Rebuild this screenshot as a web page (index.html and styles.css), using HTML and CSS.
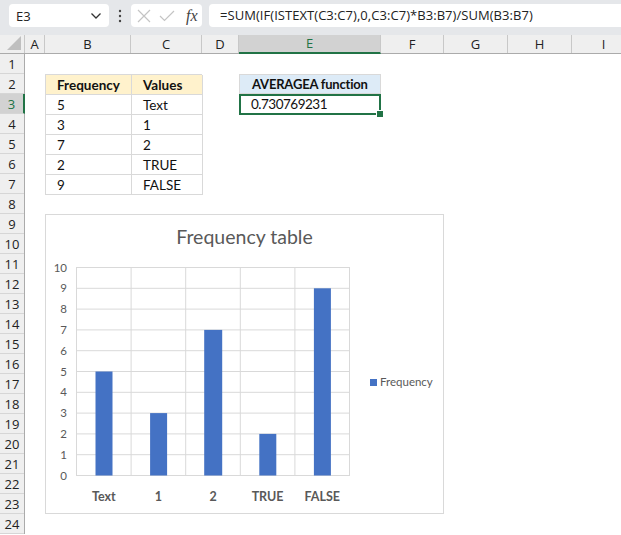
FILE: index.html
```html
<!DOCTYPE html>
<html>
<head>
<meta charset="utf-8">
<link rel="stylesheet" href="styles.css">
</head>
<body>
<div class="app">
  <div class="fbar">
    <div class="namebox">
      <span>E3</span>
      <svg class="chev" width="12" height="8" viewBox="0 0 12 8"><path d="M1.5 1.5 L6 6 L10.5 1.5" fill="none" stroke="#333" stroke-width="1.3"/></svg>
    </div>
    <div class="dots">
      <svg width="4" height="14" viewBox="0 0 4 14"><circle cx="2" cy="2" r="1.2" fill="#444"/><circle cx="2" cy="7" r="1.2" fill="#444"/><circle cx="2" cy="12" r="1.2" fill="#444"/></svg>
    </div>
    <div class="fxbox">
      <svg width="14" height="14" viewBox="0 0 14 14"><path d="M1 1 L13 13 M13 1 L1 13" stroke="#c4c4c4" stroke-width="1.2" fill="none"/></svg>
      <svg width="16" height="12" viewBox="0 0 16 12"><path d="M1 6 L5.5 10.5 L15 1" stroke="#c4c4c4" stroke-width="1.2" fill="none"/></svg>
      <span class="fx">fx</span>
    </div>
    <div class="formula">=SUM(IF(ISTEXT(C3:C7),0,C3:C7)*B3:B7)/SUM(B3:B7)</div>
  </div>

  <div class="colhdr">
    <div class="corner"><svg width="14" height="14" viewBox="0 0 14 14"><path d="M14 0 L14 14 L0 14 Z" fill="#bfbfbf"/></svg></div>
    <div class="ch w-a">A</div>
    <div class="ch w-b">B</div>
    <div class="ch w-c">C</div>
    <div class="ch w-d">D</div>
    <div class="ch w-e sel">E</div>
    <div class="ch w-f">F</div>
    <div class="ch w-g">G</div>
    <div class="ch w-h">H</div>
    <div class="ch w-i">I</div>
  </div>

  <div class="body">
    <div class="rowhdr">
      <div class="rh">1</div><div class="rh">2</div><div class="rh sel">3</div><div class="rh">4</div>
      <div class="rh">5</div><div class="rh">6</div><div class="rh">7</div><div class="rh">8</div>
      <div class="rh">9</div><div class="rh">10</div><div class="rh">11</div><div class="rh">12</div>
      <div class="rh">13</div><div class="rh">14</div><div class="rh">15</div><div class="rh">16</div>
      <div class="rh">17</div><div class="rh">18</div><div class="rh">19</div><div class="rh">20</div>
      <div class="rh">21</div><div class="rh">22</div><div class="rh">23</div><div class="rh">24</div>
    </div>
    <div class="cells">
      <div class="toprow">
        <div class="table">
          <div class="c hd">Frequency</div><div class="c hd">Values</div>
          <div class="c">5</div><div class="c">Text</div>
          <div class="c">3</div><div class="c">1</div>
          <div class="c">7</div><div class="c">2</div>
          <div class="c">2</div><div class="c">TRUE</div>
          <div class="c">9</div><div class="c">FALSE</div>
        </div>
        <div class="result">
          <div class="r hd2">AVERAGEA function</div>
          <div class="r val">0.730769231<span class="handle"></span></div>
        </div>
      </div>

      <div class="chart">
        <svg width="399" height="300" viewBox="0 0 399 300">
          <text class="title" x="199.5" y="30" text-anchor="middle">Frequency table</text>
          <g stroke="#d9d9d9" stroke-width="1">
            <line x1="31" y1="53.5" x2="304" y2="53.5"/>
            <line x1="31" y1="74.3" x2="304" y2="74.3"/>
            <line x1="31" y1="95.1" x2="304" y2="95.1"/>
            <line x1="31" y1="115.9" x2="304" y2="115.9"/>
            <line x1="31" y1="136.7" x2="304" y2="136.7"/>
            <line x1="31" y1="157.5" x2="304" y2="157.5"/>
            <line x1="31" y1="178.3" x2="304" y2="178.3"/>
            <line x1="31" y1="199.1" x2="304" y2="199.1"/>
            <line x1="31" y1="219.9" x2="304" y2="219.9"/>
            <line x1="31" y1="240.7" x2="304" y2="240.7"/>
            <line x1="31" y1="261.5" x2="304" y2="261.5"/>
            <line x1="31.5" y1="53" x2="31.5" y2="262"/>
            <line x1="86.1" y1="53" x2="86.1" y2="262"/>
            <line x1="140.7" y1="53" x2="140.7" y2="262"/>
            <line x1="195.3" y1="53" x2="195.3" y2="262"/>
            <line x1="249.9" y1="53" x2="249.9" y2="262"/>
            <line x1="304.5" y1="53" x2="304.5" y2="262"/>
          </g>
          <g fill="#4472c4">
            <rect x="50.5" y="157.5" width="17" height="104"/>
            <rect x="105.1" y="199.1" width="17" height="62.4"/>
            <rect x="159.2" y="115.9" width="18" height="145.6"/>
            <rect x="214.3" y="219.9" width="17" height="41.6"/>
            <rect x="268.9" y="74.3" width="17" height="187.2"/>
          </g>
          <g class="ylab" text-anchor="end">
            <text x="22" y="57.5">10</text>
            <text x="22" y="78.3">9</text>
            <text x="22" y="99.1">8</text>
            <text x="22" y="119.9">7</text>
            <text x="22" y="140.7">6</text>
            <text x="22" y="161.5">5</text>
            <text x="22" y="182.3">4</text>
            <text x="22" y="203.1">3</text>
            <text x="22" y="223.9">2</text>
            <text x="22" y="244.7">1</text>
            <text x="22" y="265.5">0</text>
          </g>
          <g class="xlab" text-anchor="middle">
            <text x="58.8" y="286.5">Text</text>
            <text x="113.4" y="286.5">1</text>
            <text x="168" y="286.5">2</text>
            <text x="222.6" y="286.5">TRUE</text>
            <text x="277.2" y="286.5">FALSE</text>
          </g>
          <rect x="325" y="165" width="7" height="7" fill="#4472c4"/>
          <text class="leg" x="335" y="172">Frequency</text>
        </svg>
      </div>
    </div>
  </div>
</div>
</body>
</html>
```

FILE: styles.css
```css
html, body {
  margin: 0;
  padding: 0;
  background: #ffffff;
  overflow: hidden;
}
.app {
  width: 621px;
  height: 535px;
  overflow: hidden;
  font-family: "Open Sans", "Noto Sans", sans-serif;
}
.fbar {
  height: 35px;
  background: #e5e7ea;
  display: flex;
  align-items: flex-start;
  padding-top: 4px;
  box-sizing: border-box;
}
.namebox {
  margin-left: 9px;
  width: 100px;
  height: 23px;
  background: #fff;
  border-radius: 4px;
  display: flex;
  align-items: center;
  justify-content: space-between;
  padding: 0 7px 0 7px;
  box-sizing: border-box;
  font-size: 13px;
  color: #222;
}
.chev { margin-top: 1px; }
.dots {
  width: 22px;
  height: 23px;
  display: flex;
  align-items: center;
  justify-content: center;
}
.fxbox {
  width: 71px;
  height: 23px;
  background: #fff;
  border-radius: 4px;
  display: flex;
  align-items: center;
  gap: 8px;
  padding-left: 6px;
  box-sizing: border-box;
}
.fx {
  font-family: "Liberation Serif", "DejaVu Serif", serif;
  font-style: italic;
  font-size: 16px;
  color: #444;
  margin-left: 3px;
}
.formula {
  margin-left: 7px;
  flex: 1;
  height: 23px;
  background: #fff;
  border-radius: 4px 0 0 4px;
  padding-left: 11px;
  font-size: 13px;
  letter-spacing: 0.05px;
  line-height: 23px;
  color: #222;
  white-space: nowrap;
}
.colhdr {
  display: flex;
  height: 19px;
  background: #efefef;
  border-bottom: 1px solid #ababab;
  box-sizing: border-box;
}
.corner {
  width: 25px;
  flex: none;
  border-right: 1px solid #c8c8c8;
  box-sizing: border-box;
  display: flex;
  align-items: flex-end;
  justify-content: flex-end;
  padding: 0 3px 3px 0;
}
.ch {
  flex: none;
  box-sizing: border-box;
  border-right: 1px solid #c8c8c8;
  text-align: center;
  font-size: 13px;
  line-height: 18px;
  color: #222;
}
.ch.sel {
  background: #d2d2d2;
  color: #217346;
  border-bottom: 2px solid #217346;
  line-height: 17px;
  height: 19px;
}
.w-a { width: 20px; }
.w-b { width: 86px; }
.w-c { width: 71px; }
.w-d { width: 37px; }
.w-e { width: 142px; }
.w-f { width: 63px; }
.w-g { width: 64px; }
.w-h { width: 64px; }
.w-i { width: 64px; }
.body {
  display: flex;
}
.rowhdr {
  width: 25px;
  flex: none;
  background: #efefef;
  border-right: 1px solid #ababab;
  box-sizing: border-box;
}
.rh {
  height: 20px;
  box-sizing: border-box;
  border-bottom: 1px solid #d6d6d6;
  text-align: center;
  font-size: 13px;
  line-height: 20px;
  color: #222;
}
.rh.sel {
  background: #d2d2d2;
  color: #217346;
  border-right: 2px solid #217346;
  margin-right: -1px;
}
.cells {
  flex: 1;
  padding: 20px 0 0 20px;
}
.toprow {
  display: flex;
  gap: 37px;
}
.table {
  display: grid;
  grid-template-columns: 86px 71px;
  grid-auto-rows: 20px;
  border-top: 1px solid #d9d9d9;
  border-left: 1px solid #d9d9d9;
  width: 157px;
  box-sizing: border-box;
  font-family: "Lato", "Open Sans", sans-serif;
  font-size: 13.5px;
  color: #111;
}
.c {
  border-right: 1px solid #d9d9d9;
  border-bottom: 1px solid #d9d9d9;
  padding-left: 11px;
  line-height: 20px;
  box-sizing: border-box;
  white-space: nowrap;
}
.c.hd {
  background: #fff2cc;
  font-weight: bold;
}
.result {
  width: 142px;
  font-family: "Lato", "Open Sans", sans-serif;
  font-size: 13.5px;
  color: #111;
}
.r {
  height: 20px;
  line-height: 20px;
  padding-left: 12px;
  box-sizing: border-box;
  white-space: nowrap;
}
.r.hd2 {
  background: #ddebf7;
  border: 1px solid #d9d9d9;
  font-weight: bold;
  line-height: 19px;
  letter-spacing: -0.2px;
  font-size: 13px;
}
.r.val {
  position: relative;
  height: 21px;
  border: 2px solid #217346;
  padding-left: 10px;
  line-height: 17px;
  letter-spacing: -0.5px;
}
.handle {
  position: absolute;
  right: -5px;
  bottom: -5px;
  width: 6px;
  height: 6px;
  background: #217346;
  border: 1px solid #fff;
}
.chart {
  margin-top: 19px;
  width: 399px;
  height: 300px;
  border: 1px solid #d9d9d9;
  box-sizing: border-box;
  background: #fff;
  font-family: "Lato", "Open Sans", sans-serif;
}
.chart svg {
  display: block;
  margin: -1px 0 0 -1px;
}
.title {
  font-size: 19.5px;
  fill: #595959;
}
.ylab text {
  font-size: 11.5px;
  fill: #595959;
}
.xlab text {
  font-size: 12.5px;
  font-weight: bold;
  fill: #595959;
}
.leg {
  font-size: 11.5px;
  fill: #595959;
}
```
